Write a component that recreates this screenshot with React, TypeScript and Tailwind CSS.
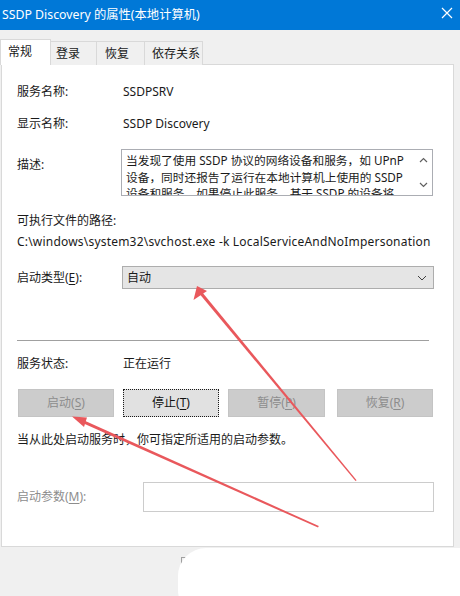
import React from "react";

const F = "font-['Segoe_UI','Noto_Sans','Noto_Sans_CJK_SC',sans-serif]";

function Btn({ label, k, disabled }: { label: string; k: string; disabled?: boolean }) {
  const base = "h-[28px] flex items-center justify-center text-[12px] leading-none";
  const cls = disabled
    ? "bg-[#cccccc] border border-[#c4c4c4] text-[#8c8c8c]"
    : "bg-[#e1e1e1] border border-dotted border-[#1a1a1a] text-[#111]";
  return (
    <div className={`${base} ${cls}`}>
      <span>
        {label}(<span className="underline underline-offset-2">{k}</span>)
      </span>
    </div>
  );
}

export default function App() {
  return (
    <div className={`relative w-[460px] h-[596px] overflow-hidden bg-[#f0f0f0] text-[#1a1a1a] ${F}`}>
      {/* title bar */}
      <div className="h-[30px] bg-[#0078d7] flex items-center justify-between text-white">
        <span className="pl-[2px] text-[12.3px] leading-none">SSDP Discovery 的属性(本地计算机)</span>
        <svg width="12" height="12" viewBox="0 0 12 12" className="mr-[7px] mb-[4px]">
          <path d="M1 1 L11 11 M11 1 L1 11" stroke="white" strokeWidth="1.2" fill="none" />
        </svg>
      </div>

      {/* tabs */}
      <div className="mt-[9px] flex items-end h-[26px] relative z-10">
        <div className="w-[51px] h-[26px] bg-white border border-b-0 border-[#d9d9d9] pl-[7px] pt-[3px] text-[12px]">常规</div>
        <div className="w-[46px] h-[24px] bg-[#f0f0f0] border-t border-r border-[#d9d9d9] pl-[5px] pt-[3px] text-[12px]">登录</div>
        <div className="w-[48px] h-[24px] bg-[#f0f0f0] border-t border-r border-[#d9d9d9] pl-[8px] pt-[3px] text-[12px]">恢复</div>
        <div className="w-[58px] h-[24px] bg-[#f0f0f0] border-t border-r border-[#d9d9d9] pl-[7px] pt-[3px] text-[12px]">依存关系</div>
      </div>

      {/* panel */}
      <div className="ml-[1px] w-[453px] h-[483px] -mt-[1px] bg-white border border-[#d9d9d9] pl-[15px] flex flex-col text-[12px]">
        <div className="mt-[17px] h-[20px] flex items-center">
          <span className="w-[106px]">服务名称:</span>
          <span>SSDPSRV</span>
        </div>
        <div className="mt-[12px] h-[20px] flex items-center">
          <span className="w-[106px]">显示名称:</span>
          <span>SSDP Discovery</span>
        </div>
        <div className="mt-[15px] h-[47px] flex items-start">
          <span className="w-[104px] pt-[6px] leading-[20px]">描述:</span>
          <div className="w-[312px] h-[47px] border border-[#abadb3] flex overflow-hidden">
            <div className="flex-1 pl-[4px] pt-[2px] text-[11.7px] leading-[16.5px] whitespace-nowrap overflow-hidden">
              <div>当发现了使用 SSDP 协议的网络设备和服务，如 UPnP</div>
              <div>设备，同时还报告了运行在本地计算机上使用的 SSDP</div>
              <div className="h-[11px] overflow-hidden">设备和服务。如果停止此服务，基于 SSDP 的设备将</div>
            </div>
            <div className="w-[17px] flex flex-col items-center justify-between py-[7px]">
              <svg width="9" height="6" viewBox="0 0 9 6"><path d="M1 5 L4.5 1.5 L8 5" stroke="#606060" strokeWidth="1.2" fill="none" /></svg>
              <svg width="9" height="6" viewBox="0 0 9 6"><path d="M1 1 L4.5 4.5 L8 1" stroke="#606060" strokeWidth="1.2" fill="none" /></svg>
            </div>
          </div>
        </div>
        <div className="mt-[15px] h-[20px] flex items-center">可执行文件的路径:</div>
        <div className="mt-[1px] h-[20px] flex items-center tracking-[0.2px]">C:\windows\system32\svchost.exe -k LocalServiceAndNoImpersonation</div>
        <div className="mt-[14px] h-[23px] flex items-center">
          <span className="w-[105px]">
            启动类型(<span className="underline underline-offset-2">E</span>):
          </span>
          <div className="w-[312px] h-[23px] bg-[#e5e5e5] border border-[#adadad] flex items-center justify-between pl-[4px] pr-[6px]">
            <span>自动</span>
            <svg width="10" height="6" viewBox="0 0 10 6"><path d="M1 1 L5 5 L9 1" stroke="#404040" strokeWidth="1" fill="none" /></svg>
          </div>
        </div>
        <div className="mt-[51px] h-[1px] w-[412px] bg-[#a0a0a0]" />
        <div className="mt-[13px] h-[20px] flex items-center">
          <span className="w-[106px]">服务状态:</span>
          <span>正在运行</span>
        </div>
        <div className="mt-[15px] flex">
          <div className="ml-[1px] w-[96px]"><Btn label="启动" k="S" disabled /></div>
          <div className="ml-[9px] w-[96px]"><Btn label="停止" k="T" /></div>
          <div className="ml-[9px] w-[97px]"><Btn label="暂停" k="P" disabled /></div>
          <div className="ml-[12px] w-[96px]"><Btn label="恢复" k="R" disabled /></div>
        </div>
        <div className="mt-[13px] h-[20px] flex items-center">当从此处启动服务时，你可指定所适用的启动参数。</div>
        <div className="mt-[32px] h-[30px] flex items-center">
          <span className="w-[126px] text-[#8d8d8d]">
            启动参数(<span className="underline underline-offset-2">M</span>):
          </span>
          <div className="w-[291px] h-[30px] border border-[#cccccc] bg-white" />
        </div>
      </div>

      {/* white blob at bottom */}
      <div className="absolute left-[181px] top-[557px] w-[10px] h-[10px] border-l border-t border-[#a0a0a0]" />
      <div className="absolute left-[178px] top-[548px] w-[300px] h-[70px] bg-white rounded-l-[28px]" />

      {/* arrows */}
      <svg className="absolute inset-0 pointer-events-none" width="460" height="596" viewBox="0 0 460 596">
        <polygon points="355.5,481 356.6,480.3 202,292 199.6,294" fill="#e9585c" />
        <polygon points="197,286 193.5,300 207,291" fill="#e9585c" />
        <polygon points="318,527.6 318.8,526 82,419.5 80.8,422.3" fill="#e9585c" />
        <polygon points="72,416.5 84,427 87,417.5" fill="#e9585c" />
      </svg>
    </div>
  );
}
